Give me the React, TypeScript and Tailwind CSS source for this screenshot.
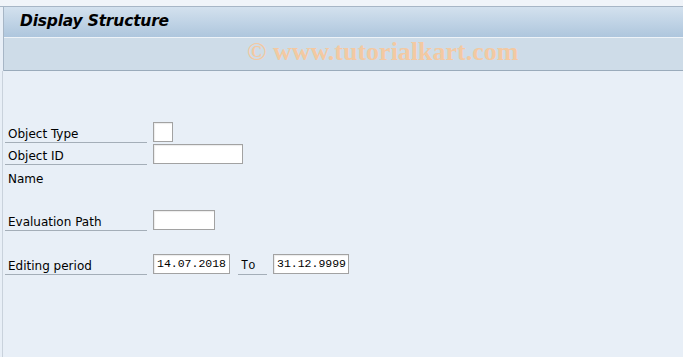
const labelFont = { fontFamily: "Tahoma, 'DejaVu Sans', sans-serif" };

const Field = ({ label, underline = true, children }: { label: string; underline?: boolean; children?: React.ReactNode }) => (
  <div className="flex h-[22px] items-end">
    <div
      className={`w-[142px] h-[22px] flex items-end pb-[1px] pl-[3px] text-[12px] leading-[14px] text-black ${underline ? "border-b border-[#a4aeb8]" : ""}`}
    >
      {label}
    </div>
    <div className="ml-[6px] flex items-end pb-[1px]">{children}</div>
  </div>
);

const Box = ({ w, value }: { w: string; value?: string }) => (
  <div
    className={`${w} h-[20px] bg-white border border-[#a2a2a2] shadow-[inset_1px_1px_1px_rgba(0,0,0,0.08)] flex items-center px-[3px] text-[11.5px] text-black`}
    style={{ fontFamily: "'Liberation Mono', monospace" }}
  >
    {value}
  </div>
);

const App = () => {
  return (
    <div className="w-[683px] h-[357px] bg-[#e8eff7] overflow-hidden" style={labelFont}>
      <div className="h-[7px] bg-[#f0f4f9] border-b border-[#a7b6c6]" />
      <div className="ml-[3px] border-l border-[#a7b6c6]">
        <div className="h-[31px] bg-gradient-to-b from-[#d3e1ee] to-[#aec6dd] flex items-center pl-[16px] border-b border-[#eef3f8]">
          <span className="text-[15.5px] font-bold italic text-black tracking-[-0.2px]">Display Structure</span>
        </div>
        <div className="h-[33px] bg-[#cedce8] border-b border-[#9aabbb] flex items-center pb-[4px]">
          <span
            className="ml-[243px] text-[26px] leading-none font-bold text-[#f3c9a2]"
            style={{ fontFamily: "'Liberation Serif', serif" }}
          >
            © www.tutorialkart.com
          </span>
        </div>
      </div>
      <div className="ml-[2px] border-l border-[#c9d2dc] h-full pt-[50px] pl-[2px]">
        <Field label="Object Type">
          <Box w="w-[20px]" />
        </Field>
        <Field label="Object ID">
          <Box w="w-[90px]" />
        </Field>
        <Field label="Name" underline={false} />
        <div className="h-[22px]" />
        <Field label="Evaluation Path">
          <Box w="w-[62px]" />
        </Field>
        <div className="h-[22px]" />
        <Field label="Editing period">
          <Box w="w-[77px]" value="14.07.2018" />
          <div
            className="ml-[8px] mr-[6px] w-[29px] h-[21px] mb-[-1px] border-b border-[#a4aeb8] flex items-end pb-[1px] pl-[3px] text-[12px] leading-[14px]"
            style={{ fontFamily: "'Liberation Mono', monospace" }}
          >
            To
          </div>
          <Box w="w-[76px]" value="31.12.9999" />
        </Field>
      </div>
    </div>
  );
};

export default App;
